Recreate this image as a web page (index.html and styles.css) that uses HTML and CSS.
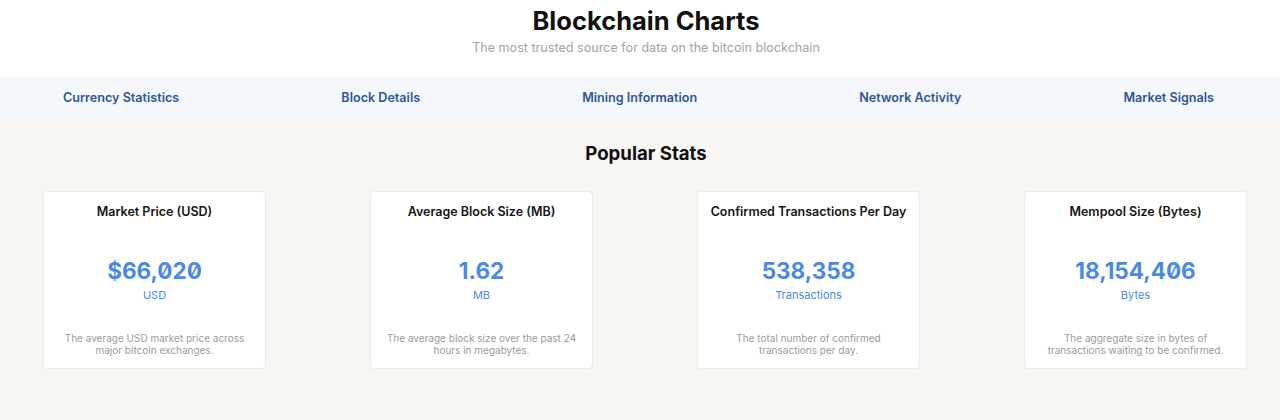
FILE: index.html
```html
<!DOCTYPE html>
<html lang="en">
<head>
  <meta charset="UTF-8" />
  <title>Blockchain Charts</title>
  <link rel="stylesheet" href="styles.css">
</head>
<body>
  <header class="page-header">
    <h1>Blockchain Charts</h1>
    <p class="subtitle">The most trusted source for data on the bitcoin blockchain</p>
  </header>

  <nav class="chart-nav">
    <a href="#">Currency Statistics</a>
    <a href="#">Block Details</a>
    <a href="#">Mining Information</a>
    <a href="#">Network Activity</a>
    <a href="#">Market Signals</a>
  </nav>

  <main class="stats">
    <h2>Popular Stats</h2>
    <div class="stat-grid">
      <div class="stat-card">
        <h3>Market Price (USD)</h3>
        <div class="stat-value">$66,020</div>
        <div class="stat-unit">USD</div>
        <p class="stat-desc">The average USD market price across major bitcoin exchanges.</p>
      </div>
      <div class="stat-card">
        <h3>Average Block Size (MB)</h3>
        <div class="stat-value">1.62</div>
        <div class="stat-unit">MB</div>
        <p class="stat-desc">The average block size over the past 24 hours in megabytes.</p>
      </div>
      <div class="stat-card">
        <h3>Confirmed Transactions Per Day</h3>
        <div class="stat-value">538,358</div>
        <div class="stat-unit">Transactions</div>
        <p class="stat-desc">The total number of confirmed transactions per day.</p>
      </div>
      <div class="stat-card">
        <h3>Mempool Size (Bytes)</h3>
        <div class="stat-value">18,154,406</div>
        <div class="stat-unit">Bytes</div>
        <p class="stat-desc">The aggregate size in bytes of transactions waiting to be confirmed.</p>
      </div>
    </div>
  </main>
</body>
</html>
```

FILE: styles.css
```css
html, body {
  margin: 0;
  padding: 0;
  height: 100%;
  font-family: Inter, "Noto Sans", Arial, sans-serif;
  background: #f7f6f3;
}

.page-header {
  background: white;
  text-align: center;
  padding: 6px 0 21px 12px;
}
.page-header h1 {
  margin: 0;
  font-size: 25.5px;
  line-height: 29px;
  font-weight: 700;
  color: #111;
}
.subtitle {
  margin: 5px 0 0;
  font-size: 12.6px;
  line-height: 16px;
  color: #a3a3a3;
}

.chart-nav {
  background: #f4f8fb;
  height: 41px;
  display: flex;
  align-items: center;
  justify-content: space-between;
  padding: 0 66px 0 63px;
}
.chart-nav a {
  color: #2f5597;
  text-decoration: none;
  font-size: 12.6px;
  font-weight: 600;
}

.stats {
  padding: 24px 0 40px;
}
.stats h2 {
  margin: 0 0 26px;
  padding-left: 12px;
  text-align: center;
  font-size: 18.6px;
  line-height: 23px;
  font-weight: 700;
  color: #111;
}

.stat-grid {
  display: grid;
  grid-template-columns: repeat(4, 223px);
  column-gap: 104px;
  padding-left: 43px;
}
.stat-card {
  background: white;
  border: 1px solid #ecebe8;
  border-radius: 4px;
  text-align: center;
  padding: 12px 14px 12px;
  height: 178px;
  box-sizing: border-box;
  display: flex;
  flex-direction: column;
  align-items: center;
}
.stat-card h3 {
  margin: 0;
  font-size: 12.5px;
  line-height: 16px;
  font-weight: 600;
  color: #151515;
  white-space: nowrap;
}
.stat-value {
  margin-top: 37px;
  font-size: 22.5px;
  line-height: 27px;
  font-weight: 700;
  color: #4a89e8;
  font-feature-settings: "zero" 1;
}
.stat-unit {
  margin-top: 4px;
  font-size: 11px;
  line-height: 14px;
  color: #4a89e8;
}
.stat-desc {
  margin: auto 0 0;
  font-size: 10px;
  line-height: 12px;
  color: #9a9a9a;
}
```
